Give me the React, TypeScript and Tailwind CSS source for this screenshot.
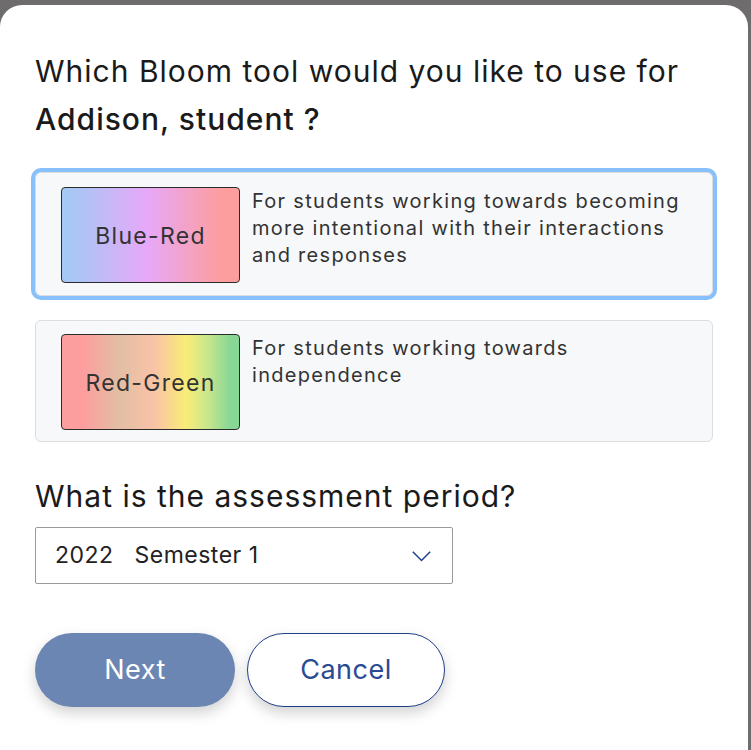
const tools = [
  {
    name: "Blue-Red",
    text: "For students working towards becoming more intentional with their interactions and responses",
    gradient: "bg-[linear-gradient(90deg,#a6c8f5_5%,#e7a8f9_48%,#fd9e9e_90%)]",
    selected: true,
  },
  {
    name: "Red-Green",
    text: "For students working towards independence",
    gradient:
      "bg-[linear-gradient(90deg,#fd9e9e_12%,#e2bea4_32%,#f9c3a6_52%,#f9ec78_70%,#c9e78c_82%,#88d795_95%)]",
    selected: false,
  },
];

export default function App() {
  return (
    <div className="h-[750px] overflow-hidden bg-[#6e6c6c] pt-[5px] pr-[3px] font-['Inter',sans-serif] text-[#333333]">
      <div className="h-[800px] w-[748px] rounded-[22px] bg-white pl-[35px] pr-[35px] pt-[42px]">
        {/* title */}
        <h2 className="text-[30px] leading-[48px] font-normal tracking-[1px] text-[#1a1a1a]">
          Which Bloom tool would you like to use for
          <br />
          <span className="font-medium">Addison, student ?</span>
        </h2>

        {/* tool cards */}
        <div className="mt-[29px] flex flex-col gap-[24px]">
          {tools.map((t) => (
            <div
              key={t.name}
              className={`flex w-[678px] gap-[12px] rounded-[6px] border border-[#dcdde0] bg-[#f7f8fa] pl-[25px] ${
                t.selected ? "h-[124px] pt-[14px] shadow-[0_0_0_4px_#88c0fb]" : "h-[122px] pt-[13px]"
              }`}
            >
              <div
                className={`flex h-[96px] w-[179px] shrink-0 items-center justify-center rounded-[4px] border border-[#2b2b2b] pt-[2px] text-[23px] tracking-[1.3px] text-[#333] ${t.gradient}`}
              >
                {t.name}
              </div>
              <p className="w-[445px] pt-[1px] text-[20px] leading-[27px] tracking-[1.3px] text-[#333]">{t.text}</p>
            </div>
          ))}
        </div>

        {/* assessment period */}
        <p className="mt-[34px] text-[30px] leading-[40px] tracking-[1px] text-[#1a1a1a]">
          What is the assessment period?
        </p>
        <div className="mt-[11px] flex h-[57px] w-[418px] items-center justify-between rounded-[2px] border border-[#9a9a9a] pl-[19px] pr-[21px] text-[23px] tracking-[0.5px] text-[#222]">
          <span className="whitespace-pre">2022   Semester 1</span>
          <svg width="19" height="11" viewBox="0 0 19 11" fill="none" className="mt-[1px]">
            <polyline points="0.8,0.8 9.5,9.5 18.2,0.8" stroke="#1e3f8a" strokeWidth="1.5" />
          </svg>
        </div>

        {/* actions */}
        <div className="mt-[49px] flex gap-[12px]">
          <button className="h-[74px] w-[200px] rounded-full bg-[#6c86b3] text-[27px] tracking-[0.5px] text-white shadow-[0_6px_14px_rgba(0,0,0,0.18)]">
            Next
          </button>
          <button className="h-[74px] w-[198px] rounded-full border border-[#1e3f8a] bg-white text-[27px] tracking-[0.5px] text-[#2a4a92] shadow-[0_6px_14px_rgba(0,0,0,0.18)]">
            Cancel
          </button>
        </div>
      </div>
    </div>
  );
}
